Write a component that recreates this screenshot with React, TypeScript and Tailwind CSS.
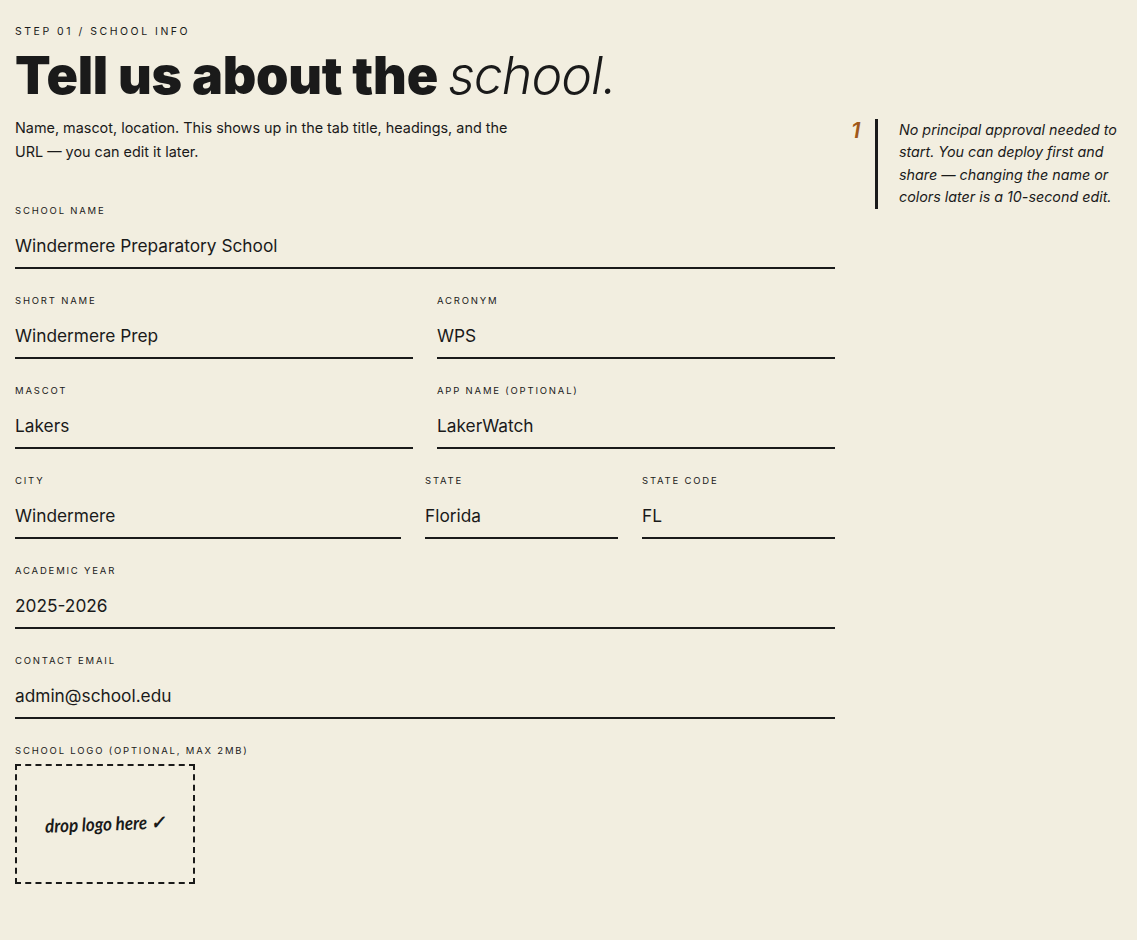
import React from 'react';

const Field: React.FC<{ label: string; value: string }> = ({ label, value }) => (
  <label className="block">
    <span className="block h-[14px] text-[9.5px] leading-[14px] tracking-[0.19em] uppercase text-[#1a1a1a]">
      {label}
    </span>
    <input
      readOnly
      defaultValue={value}
      className="block w-full h-[51px] pt-[5px] bg-transparent border-b-2 border-[#1a1a1a] text-[17.3px] text-[#1a1a1a] outline-none"
    />
  </label>
);

export default function App() {
  return (
    <div className="min-h-[940px] bg-[#f2eee0] pl-[15px] pr-4 pt-[25px] font-['Inter',sans-serif] text-[#1a1a1a]">
      <div className="flex">
        <main className="w-[820px] shrink-0">
          <div className="text-[10.5px] leading-[14px] tracking-[0.24em] uppercase">Step 01 / School Info</div>
          <h1 className="mt-[11px] h-[52px] text-[52px] leading-[52px] whitespace-nowrap">
            <span className="font-black tracking-[-0.005em]">Tell us about the </span>
            <span className="font-light italic tracking-[-0.02em]">school.</span>
          </h1>
          <p className="mt-[14px] w-[520px] text-[14.4px] leading-[24px]">
            Name, mascot, location. This shows up in the tab title, headings, and the URL — you can edit it later.
          </p>
          <div className="mt-[40px] flex flex-col gap-[25px]">
            <Field label="School Name" value="Windermere Preparatory School" />
            <div className="grid grid-cols-2 gap-x-6">
              <Field label="Short Name" value="Windermere Prep" />
              <Field label="Acronym" value="WPS" />
            </div>
            <div className="grid grid-cols-2 gap-x-6">
              <Field label="Mascot" value="Lakers" />
              <Field label="App Name (optional)" value="LakerWatch" />
            </div>
            <div className="grid grid-cols-[2fr_1fr_1fr] gap-x-6">
              <Field label="City" value="Windermere" />
              <Field label="State" value="Florida" />
              <Field label="State Code" value="FL" />
            </div>
            <Field label="Academic Year" value="2025-2026" />
            <Field label="Contact Email" value="admin@school.edu" />
            <div>
              <div className="h-[14px] text-[9.5px] leading-[14px] tracking-[0.19em] uppercase">
                School Logo (optional, max 2MB)
              </div>
              <div className="mt-[6px] w-[180px] h-[120px] border-2 border-dashed border-[#1a1a1a] flex items-center justify-center">
                <span className="-rotate-2 scale-y-110 text-[17px] italic font-bold font-['Lato',sans-serif] whitespace-nowrap">drop logo here ✓</span>
              </div>
            </div>
          </div>
        </main>
        <aside className="ml-4 mt-[93.7px] flex h-[90px] items-start">
          <span className="w-[24px] text-[22px] leading-[22px] italic font-semibold text-[#a0581a]">1</span>
          <p className="h-[90px] w-[246px] border-l-[3px] border-[#1a1a1a] pl-[21px] text-[14.3px] leading-[22.5px] italic">
            No principal approval needed to start. You can deploy first and share — changing the name or colors later is a 10-second edit.
          </p>
        </aside>
      </div>
    </div>
  );
}
